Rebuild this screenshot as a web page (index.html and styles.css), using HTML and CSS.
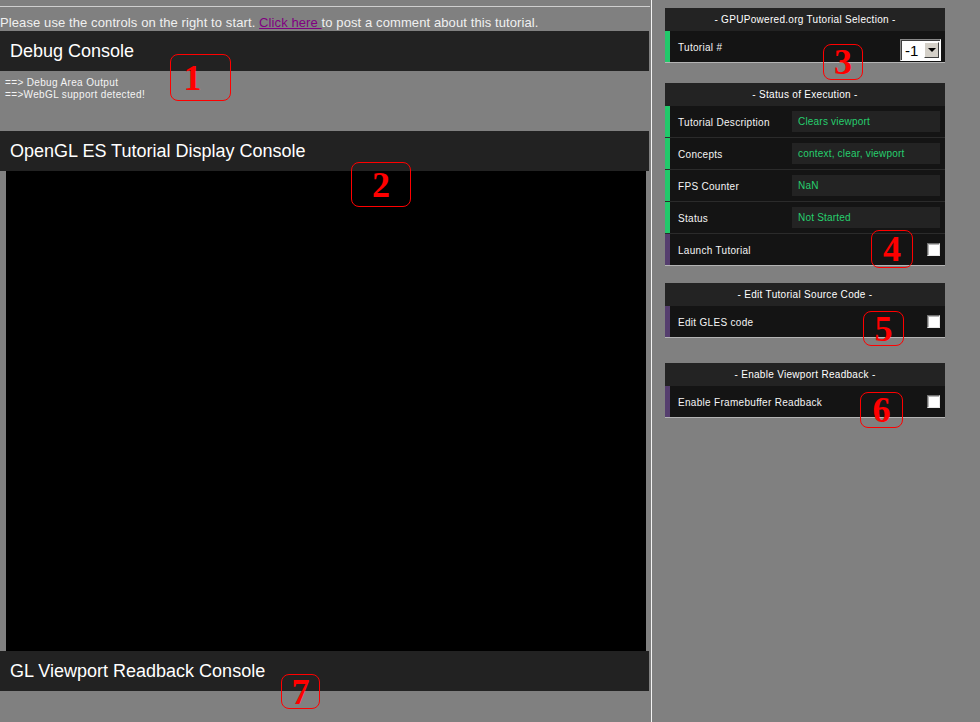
FILE: index.html
```html
<!DOCTYPE html>
<html lang="en">
<head>
<meta charset="utf-8">
<title>GPUPowered.org Tutorial</title>
<link rel="stylesheet" href="styles.css">
</head>
<body>
<div class="page">
  <main class="main">
    <div class="rule"></div>
    <p class="intro">Please use the controls on the right to start. <a href="#" class="link">Click here </a>to post a comment about this tutorial.</p>
    <section class="console">
      <h2 class="console-title">Debug Console</h2>
      <div class="debug-output">
        <div>==&gt; Debug Area Output</div>
        <div>==&gt;WebGL support detected!</div>
      </div>
    </section>
    <section class="console">
      <h2 class="console-title">OpenGL ES Tutorial Display Console</h2>
      <div class="canvas"></div>
    </section>
    <section class="console">
      <h2 class="console-title">GL Viewport Readback Console</h2>
    </section>
  </main>

  <aside class="sidebar">
    <div class="panel panel-selection">
      <div class="panel-title">- GPUPowered.org Tutorial Selection -</div>
      <div class="row row-green row-last">
        <span class="row-label">Tutorial #</span>
        <span class="select"><span class="select-value">-1</span><span class="select-btn"><span class="arrow"></span></span></span>
      </div>
    </div>

    <div class="panel panel-status">
      <div class="panel-title">- Status of Execution -</div>
      <div class="row row-green">
        <span class="row-label">Tutorial Description</span>
        <span class="value">Clears viewport</span>
      </div>
      <div class="row row-green">
        <span class="row-label">Concepts</span>
        <span class="value">context, clear, viewport</span>
      </div>
      <div class="row row-green">
        <span class="row-label">FPS Counter</span>
        <span class="value">NaN</span>
      </div>
      <div class="row row-green">
        <span class="row-label">Status</span>
        <span class="value">Not Started</span>
      </div>
      <div class="row row-purple row-last">
        <span class="row-label">Launch Tutorial</span>
        <span class="checkbox"></span>
      </div>
    </div>

    <div class="panel panel-edit">
      <div class="panel-title">- Edit Tutorial Source Code -</div>
      <div class="row row-purple row-last">
        <span class="row-label">Edit GLES code</span>
        <span class="checkbox"></span>
      </div>
    </div>

    <div class="panel panel-readback">
      <div class="panel-title">- Enable Viewport Readback -</div>
      <div class="row row-purple row-last">
        <span class="row-label">Enable Framebuffer Readback</span>
        <span class="checkbox"></span>
      </div>
    </div>
  </aside>
</div>

<div class="mark mark-1"><span class="mark-num mark-num-1">1</span></div>
<div class="mark mark-2"><span class="mark-num">2</span></div>
<div class="mark mark-3"><span class="mark-num">3</span></div>
<div class="mark mark-4"><span class="mark-num">4</span></div>
<div class="mark mark-5"><span class="mark-num">5</span></div>
<div class="mark mark-6"><span class="mark-num">6</span></div>
<div class="mark mark-7"><span class="mark-num">7</span></div>
</body>
</html>
```

FILE: styles.css
```css
html, body {
  margin: 0;
  padding: 0;
}

body {
  background: #808080;
  font-family: "Liberation Sans", Arial, sans-serif;
  color: #f2f2f2;
  position: relative;
  min-height: 722px;
  overflow: hidden;
}

.page {
  display: flex;
  align-items: stretch;
  min-height: 722px;
}

.main {
  width: 651px;
  flex: none;
  border-right: 1px solid #f4f4f4;
}

.rule {
  width: 650px;
  height: 1px;
  margin-top: 6px;
  background: #cfcfcf;
}

.intro {
  margin: 8px 0 0 0;
  font-size: 13px;
  line-height: 16px;
  letter-spacing: 0.1px;
  color: #f0f0f0;
  white-space: nowrap;
}

.link {
  color: #800080;
  text-decoration: underline;
}

.console-title {
  margin: 0;
  width: 639px;
  height: 40px;
  padding-left: 10px;
  background: #222222;
  color: #ffffff;
  font-size: 18px;
  font-weight: normal;
  line-height: 40px;
}

.debug-output {
  height: 54px;
  padding: 6px 0 0 5px;
  font-size: 10px;
  line-height: 12px;
  letter-spacing: 0.35px;
  color: #f4f4f4;
}

.canvas {
  width: 640px;
  height: 480px;
  margin-left: 6px;
  background: #000000;
}

/* Sidebar */
.sidebar {
  width: 280px;
  margin-left: 13px;
  flex: none;
}

.panel {
  background: #141414;
}

.panel-selection { margin-top: 8px; }
.panel-status { margin-top: 20px; }
.panel-edit { margin-top: 17px; }
.panel-readback { margin-top: 25px; }

.panel-title {
  height: 23px;
  line-height: 23px;
  background: #232323;
  color: #ffffff;
  text-align: center;
  font-size: 10px;
  letter-spacing: 0.3px;
}

.row {
  height: 31px;
  display: flex;
  align-items: center;
  border-bottom: 1px solid #2b2b2b;
  padding-right: 5px;
}

.row-green { box-shadow: inset 5px 0 0 #22c96b; }
.row-purple { box-shadow: inset 5px 0 0 #553e6e; }
.row-last { border-bottom-color: #b4b4b4; }

.row-label {
  flex: 1;
  padding-left: 13px;
  padding-top: 2px;
  font-size: 10px;
  letter-spacing: 0.3px;
  color: #f4f4f4;
  white-space: nowrap;
}

.value {
  width: 142px;
  height: 21px;
  padding-left: 6px;
  background: #232323;
  color: #26cf6e;
  font-size: 10px;
  line-height: 21px;
  letter-spacing: 0.2px;
  white-space: nowrap;
}

.checkbox {
  width: 11px;
  height: 11px;
  background: #ffffff;
  border: 1px solid;
  border-color: #6e6e6e #e8e8e8 #e8e8e8 #6e6e6e;
  box-shadow: inset 1px 1px 0 #b8b8b8;
}

/* Select */
.panel-selection .row {
  padding-right: 4px;
  align-items: flex-end;
}

.panel-selection .row-label {
  align-self: center;
}

.select {
  display: flex;
  width: 39px;
  height: 20px;
  margin-bottom: 1px;
  background: #ffffff;
  border: 1px solid;
  border-color: #8a8a8a #ffffff #ffffff #8a8a8a;
  box-shadow: inset 1px 1px 0 #404040;
}

.select-value {
  flex: 1;
  padding-left: 4px;
  padding-top: 1px;
  font-size: 15px;
  line-height: 19px;
  color: #000000;
}

.select-btn {
  box-sizing: border-box;
  width: 15px;
  height: 16px;
  margin: 2px 1px 0 0;
  background: #d4d0c8;
  border: 1px solid;
  border-color: #ffffff #404040 #404040 #ffffff;
  display: flex;
  align-items: center;
  justify-content: center;
}

.arrow {
  width: 0;
  height: 0;
  border-left: 4px solid transparent;
  border-right: 4px solid transparent;
  border-top: 4px solid #000000;
}

/* Annotation marks */
.mark {
  position: absolute;
  border: 1px solid #ff0000;
  border-radius: 8px;
  display: flex;
  align-items: center;
  justify-content: center;
  box-sizing: border-box;
}

.mark-num {
  font-family: "Liberation Serif", "Times New Roman", serif;
  font-weight: bold;
  font-size: 36px;
  line-height: 1;
  color: #ff0000;
}

.mark-num-1 { margin-right: 16px; }

.mark-1 { left: 170px; top: 54px; width: 61px; height: 47px; }
.mark-2 { left: 351px; top: 162px; width: 60px; height: 45px; }
.mark-3 { left: 823px; top: 44px; width: 40px; height: 36px; }
.mark-4 { left: 871px; top: 230px; width: 42px; height: 38px; }
.mark-5 { left: 863px; top: 311px; width: 41px; height: 35px; }
.mark-6 { left: 860px; top: 392px; width: 43px; height: 36px; }
.mark-7 { left: 281px; top: 674px; width: 39px; height: 35px; }
```
